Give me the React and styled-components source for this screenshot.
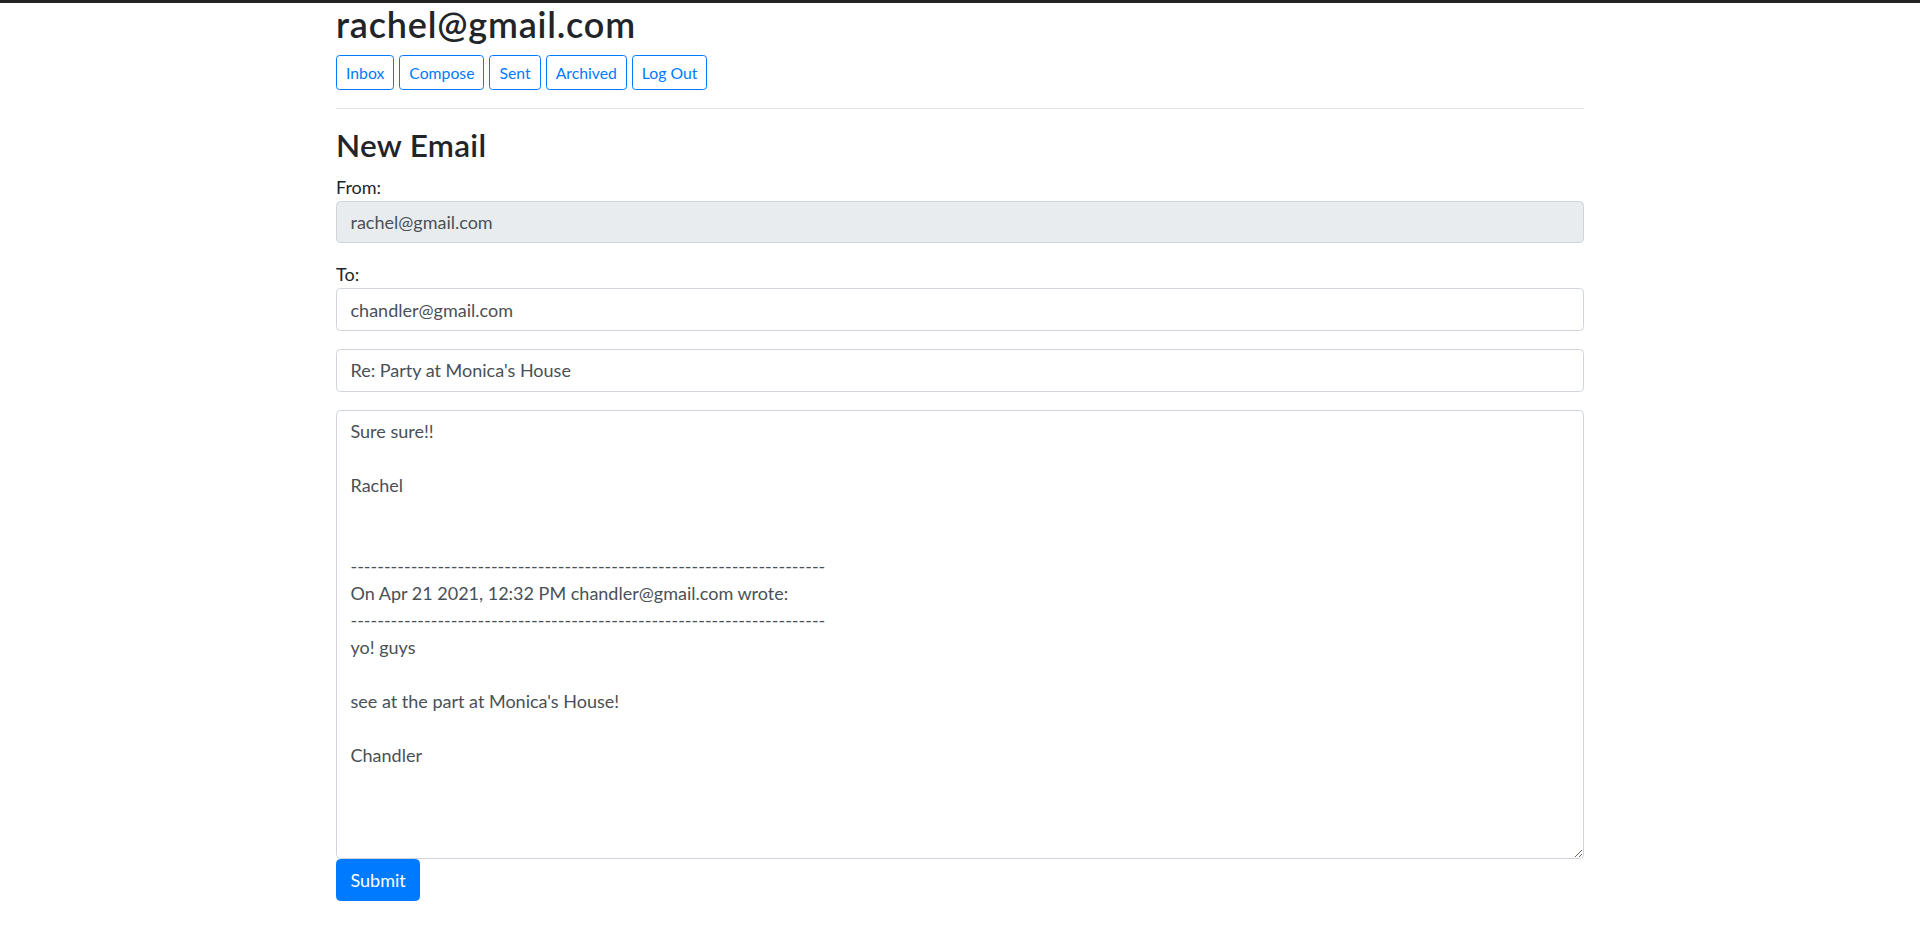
import React from "react";
import styled, { createGlobalStyle } from "styled-components";

const Global = createGlobalStyle`
  html, body { margin: 0; padding: 0; background: #fff; }
  body {
    font-family: Lato, "Liberation Sans", sans-serif;
    font-size: 18px;
    line-height: 27px;
    color: #212529;
  }
  * { box-sizing: border-box; }
`;

const TopBar = styled.div`
  height: 3px;
  background: #232323;
`;

const Container = styled.div`
  width: 1248px;
  margin: 0 auto;
`;

const UserTitle = styled.h2`
  margin: 0 0 9px;
  font-size: 36px;
  line-height: 1.2;
  font-weight: 600;
  letter-spacing: 0.8px;
`;

const Nav = styled.nav`
  display: flex;
  gap: 5px;
`;

const NavButton = styled.button`
  font-family: inherit;
  font-size: 15.75px;
  line-height: 1.5;
  padding: 4.5px 9px;
  border: 1px solid #007bff;
  border-radius: 3.6px;
  color: #007bff;
  background: transparent;
  cursor: pointer;
`;

const Rule = styled.hr`
  margin: 18px 0;
  border: 0;
  border-top: 1px solid rgba(0, 0, 0, 0.1);
`;

const FormTitle = styled.h3`
  margin: 0 0 9px;
  font-size: 31.5px;
  line-height: 1.2;
  font-weight: 600;
  letter-spacing: 0.3px;
`;

const Group = styled.div`
  margin-bottom: 18px;
`;

const FieldLabel = styled.div`
  line-height: 27px;
`;

const Input = styled.input`
  display: block;
  width: 100%;
  height: 42.75px;
  padding: 6.75px 13.5px;
  font-family: inherit;
  font-size: 18px;
  line-height: 27px;
  color: #495057;
  background: ${(p) => (p.disabled ? "#e9ecef" : "#fff")};
  border: 1px solid #ced4da;
  border-radius: 4.5px;
  outline: none;
`;

const Body = styled.textarea`
  display: block;
  width: 100%;
  height: 449px;
  padding: 6.75px 13.5px;
  font-family: inherit;
  font-size: 18px;
  line-height: 27px;
  color: #495057;
  background: #fff;
  border: 1px solid #ced4da;
  border-radius: 4.5px;
  outline: none;
  resize: vertical;
`;

const Submit = styled.button`
  font-family: inherit;
  font-size: 18px;
  line-height: 27px;
  padding: 6.75px 13.5px;
  color: #fff;
  background: #007bff;
  border: 1px solid #007bff;
  border-radius: 4.5px;
  cursor: pointer;
`;

const dashes = "-".repeat(71);
const bodyText = `Sure sure!!

Rachel


${dashes}
On Apr 21 2021, 12:32 PM chandler@gmail.com wrote:
${dashes}
yo! guys

see at the part at Monica's House!

Chandler`;

export default function App() {
  return (
    <>
      <Global />
      <TopBar />
      <Container>
        <UserTitle>rachel@gmail.com</UserTitle>
        <Nav>
          {["Inbox", "Compose", "Sent", "Archived", "Log Out"].map((t) => (
            <NavButton key={t}>{t}</NavButton>
          ))}
        </Nav>
        <Rule />
        <FormTitle>New Email</FormTitle>
        <form onSubmit={(e) => e.preventDefault()}>
          <Group>
            <FieldLabel>From:</FieldLabel>
            <Input disabled defaultValue="rachel@gmail.com" />
          </Group>
          <Group>
            <FieldLabel>To:</FieldLabel>
            <Input defaultValue="chandler@gmail.com" />
          </Group>
          <Group>
            <Input defaultValue="Re: Party at Monica's House" />
          </Group>
          <Body defaultValue={bodyText} />
          <Submit type="submit">Submit</Submit>
        </form>
      </Container>
    </>
  );
}
